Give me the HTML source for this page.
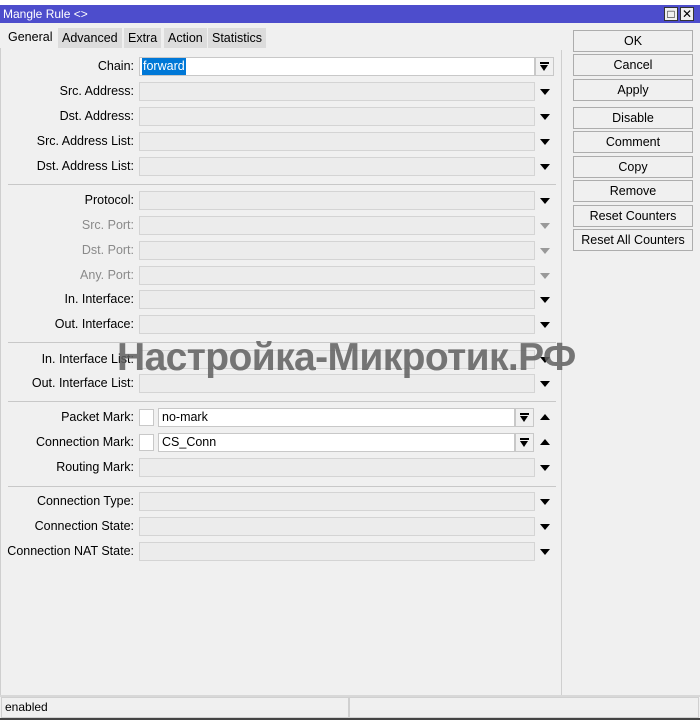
<!DOCTYPE html>
<html><head><meta charset="utf-8"><style>
*{box-sizing:border-box;margin:0;padding:0}
body{width:700px;height:720px;background:#f0f0f0;font-family:"Liberation Sans",sans-serif;font-size:12px;color:#000;position:relative;overflow:hidden}
.a{position:absolute}
.title{left:0;top:5px;width:700px;height:18px;background:#4d4dcc;color:#fff;font-size:12px;line-height:18px;padding-left:3px}
.wb{top:7px;width:14px;height:14px;background:#f0f0f0;border:1px solid #333;font-size:12px;line-height:12px;text-align:center;color:#000}
.tab{top:28px;height:20px;line-height:20px;background:#dcdcdc;padding:0 4px;border-right:1px solid #f0f0f0;font-size:12.5px}
.lab{right:566px;width:200px;text-align:right;height:19px;line-height:19px;font-size:12.5px}
.fld{left:139px;width:396px;height:19px;border:1px solid #d4d4d4;background:#ececec;font-size:12.5px}
.arr{left:540px;width:0;height:0;border-left:5px solid transparent;border-right:5px solid transparent;border-top:6px solid #000}
.dis{color:#8a8a8a}
.sep{left:8px;width:548px;height:1px;background:#c8c8c8}
.btn{left:573px;width:120px;height:22px;border:1px solid #adadad;background:#f0f0f0;text-align:center;line-height:20px;font-size:12.5px}
.dd{width:19px;height:19px;border:1px solid #c8c8c8;background:#f0f0f0}
.dd i{position:absolute;left:4px;top:4px;width:9px;height:2px;background:#000}
.dd b{position:absolute;left:4px;top:7px;width:0;height:0;border-left:4.5px solid transparent;border-right:4.5px solid transparent;border-top:6px solid #000}
</style></head><body>
<div class="a" style="left:0;top:0;width:700px;height:5px;background:#fff"></div>
<div class="a title">Mangle Rule &lt;&gt;</div>
<div class="a wb" style="left:664px">□</div>
<div class="a wb" style="left:680px">✕</div>
<div class="a" style="left:4px;top:26px;width:54px;height:22px;background:#f0f0f0;line-height:22px;padding-left:4px;font-size:12.5px">General</div>
<div class="a tab" style="left:58px">Advanced</div>
<div class="a tab" style="left:124px">Extra</div>
<div class="a tab" style="left:164px">Action</div>
<div class="a tab" style="left:208px">Statistics</div>
<div class="a" style="left:561px;top:50px;width:1px;height:645px;background:#cfcfcf"></div>
<div class="a" style="left:0;top:48px;width:1px;height:648px;background:#cfcfcf"></div>

<div class="a lab" style="top:57px">Chain:</div>
<div class="a fld" style="top:57px;background:#fff;border-color:#c8c8c8;width:396px"><span style="background:#0078d7;color:#fff;margin-left:2px;line-height:17px;display:inline-block;padding:0 1px">forward</span></div>
<div class="a dd" style="left:535px;top:57px"><i></i><b></b></div>

<div class="a lab" style="top:82px">Src. Address:</div><div class="a fld" style="top:82px"></div><div class="a arr" style="top:89px"></div>
<div class="a lab" style="top:107px">Dst. Address:</div><div class="a fld" style="top:107px"></div><div class="a arr" style="top:114px"></div>
<div class="a lab" style="top:132px">Src. Address List:</div><div class="a fld" style="top:132px"></div><div class="a arr" style="top:139px"></div>
<div class="a lab" style="top:157px">Dst. Address List:</div><div class="a fld" style="top:157px"></div><div class="a arr" style="top:164px"></div>
<div class="a sep" style="top:184px"></div>
<div class="a lab" style="top:191px">Protocol:</div><div class="a fld" style="top:191px"></div><div class="a arr" style="top:198px"></div>
<div class="a lab dis" style="top:216px">Src. Port:</div><div class="a fld" style="top:216px"></div><div class="a arr" style="top:223px;border-top-color:#999"></div>
<div class="a lab dis" style="top:241px">Dst. Port:</div><div class="a fld" style="top:241px"></div><div class="a arr" style="top:248px;border-top-color:#999"></div>
<div class="a lab dis" style="top:266px">Any. Port:</div><div class="a fld" style="top:266px"></div><div class="a arr" style="top:273px;border-top-color:#999"></div>
<div class="a lab" style="top:290px">In. Interface:</div><div class="a fld" style="top:290px"></div><div class="a arr" style="top:297px"></div>
<div class="a lab" style="top:315px">Out. Interface:</div><div class="a fld" style="top:315px"></div><div class="a arr" style="top:322px"></div>
<div class="a sep" style="top:342px"></div>
<div class="a lab" style="top:350px">In. Interface List:</div><div class="a fld" style="top:350px"></div><div class="a arr" style="top:357px"></div>
<div class="a lab" style="top:374px">Out. Interface List:</div><div class="a fld" style="top:374px"></div><div class="a arr" style="top:381px"></div>
<div class="a sep" style="top:401px"></div>
<div class="a lab" style="top:408px">Packet Mark:</div>
<div class="a" style="left:139px;top:409px;width:15px;height:17px;background:#fff;border:1px solid #c8c8c8"></div>
<div class="a fld" style="left:158px;top:408px;width:357px;background:#fff;border-color:#c8c8c8;padding-left:3px;line-height:17px">no-mark</div>
<div class="a dd" style="left:515px;top:408px"><i></i><b></b></div>
<div class="a" style="left:540px;top:414px;width:0;height:0;border-left:5px solid transparent;border-right:5px solid transparent;border-bottom:6px solid #000"></div>
<div class="a lab" style="top:433px">Connection Mark:</div>
<div class="a" style="left:139px;top:434px;width:15px;height:17px;background:#fff;border:1px solid #c8c8c8"></div>
<div class="a fld" style="left:158px;top:433px;width:357px;background:#fff;border-color:#c8c8c8;padding-left:3px;line-height:17px">CS_Conn</div>
<div class="a dd" style="left:515px;top:433px"><i></i><b></b></div>
<div class="a" style="left:540px;top:439px;width:0;height:0;border-left:5px solid transparent;border-right:5px solid transparent;border-bottom:6px solid #000"></div>
<div class="a lab" style="top:458px">Routing Mark:</div><div class="a fld" style="top:458px"></div><div class="a arr" style="top:465px"></div>
<div class="a sep" style="top:486px"></div>
<div class="a lab" style="top:492px">Connection Type:</div><div class="a fld" style="top:492px"></div><div class="a arr" style="top:499px"></div>
<div class="a lab" style="top:517px">Connection State:</div><div class="a fld" style="top:517px"></div><div class="a arr" style="top:524px"></div>
<div class="a lab" style="top:542px">Connection NAT State:</div><div class="a fld" style="top:542px"></div><div class="a arr" style="top:549px"></div>

<div class="a" style="left:117px;top:335px;font-size:39px;font-weight:bold;line-height:46px;color:rgba(95,95,95,0.85);white-space:nowrap;letter-spacing:-0.6px">Настройка-Микротик.РФ</div>

<div class="a btn" style="top:30px">OK</div>
<div class="a btn" style="top:54px">Cancel</div>
<div class="a btn" style="top:79px">Apply</div>
<div class="a btn" style="top:107px">Disable</div>
<div class="a btn" style="top:131px">Comment</div>
<div class="a btn" style="top:156px">Copy</div>
<div class="a btn" style="top:180px">Remove</div>
<div class="a btn" style="top:205px">Reset Counters</div>
<div class="a btn" style="top:229px">Reset All Counters</div>

<div class="a" style="left:0;top:695px;width:700px;height:2px;background:#d8d8d8"></div>
<div class="a" style="left:1px;top:697px;width:348px;height:21px;border:1px solid #d0d0d0;line-height:19px;padding-left:3px">enabled</div>
<div class="a" style="left:349px;top:697px;width:350px;height:21px;border:1px solid #d0d0d0"></div>
<div class="a" style="left:0;top:718px;width:700px;height:2px;background:#444"></div>
</body></html>
